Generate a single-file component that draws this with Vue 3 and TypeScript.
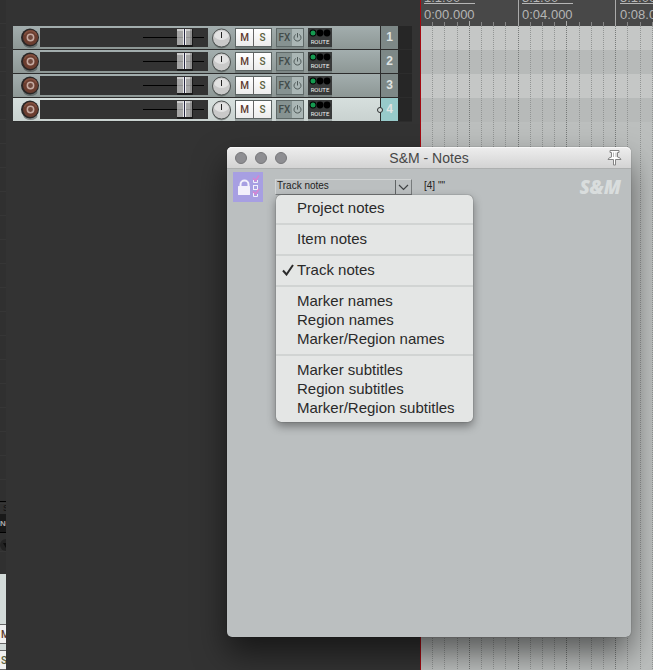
<script setup lang="ts">
import { ref } from 'vue'

interface Track {
  id: number
  selected: boolean
}

const tracks: Track[] = [
  { id: 1, selected: false },
  { id: 2, selected: false },
  { id: 3, selected: false },
  { id: 4, selected: true },
]

const marks = [
  { bar: '1.1.00', time: '0:00.000' },
  { bar: '3.1.00', time: '0:04.000' },
  { bar: '5.1.00', time: '0:08.000' },
]

const ticks = Array.from({ length: 80 }, (_, n) => {
  const i = n + 1
  return { x: Math.floor(12.2 * i - 0.5) + 0.5, major: i % 8 === 0, beat: i % 4 === 0 }
})

const groups: string[][] = [
  ['Project notes'],
  ['Item notes'],
  ['Track notes'],
  ['Marker names', 'Region names', 'Marker/Region names'],
  ['Marker subtitles', 'Region subtitles', 'Marker/Region subtitles'],
]
const current = ref('Track notes')
const open = ref(true)

function choose(name: string) {
  current.value = name
  open.value = false
}
</script>

<template>
  <div class="app">
    <aside class="dock">
      <div class="dock-line"></div>
      <div class="dock-s">S</div>
      <div class="dock-no">NO</div>
      <div class="dock-knob">
        <svg width="6" height="12" viewBox="0 0 6 12">
          <path d="M3 4h3v5z" fill="#0c0c0c" />
        </svg>
      </div>
      <div class="dock-strip">
        <button class="dock-btn mute">M</button>
        <button class="dock-btn solo">S</button>
      </div>
    </aside>

    <section class="tracks">
      <div v-for="t in tracks" :key="t.id" class="track" :class="{ selected: t.selected }">
        <div class="face">
          <button class="rec" aria-label="Record arm">
            <svg width="20" height="21" viewBox="0 0 20 21">
              <ellipse cx="10.500" cy="17" rx="7" ry="4" fill="#3a4040" opacity=".5" />
              <circle cx="10" cy="10.500" r="9" fill="#292626" />
              <circle cx="10.500" cy="10.500" r="7.500" fill="#6b3d2f" />
              <path d="M4.500 8a6.500 6.500 0 0 1 12 0" fill="none" stroke="#82503f" stroke-width="1.500" />
              <circle cx="10.500" cy="10.500" r="3.200" fill="#70493d" stroke="#c5aaa2" stroke-width="1.500" />
            </svg>
          </button>
          <div class="slot">
            <svg width="65" height="19" viewBox="0 0 65 19">
              <path d="M0 9.500H61" stroke="#000" />
              <rect x="34" y="1" width="16" height="18" rx="1" fill="#191919" />
              <rect x="34" y="1" width="15" height="16" fill="#a6a6a6" />
              <rect x="34" y="1" width="15" height="2" fill="#cbcbcb" />
              <rect x="34" y="9" width="15" height="1" fill="#919191" />
              <rect x="40" y="1" width="1" height="16" fill="#e8e8e8" />
              <rect x="41" y="1" width="1" height="16" fill="#25253f" />
              <rect x="42" y="1" width="1" height="16" fill="#f2f2f2" />
              <rect x="47" y="1" width="2" height="16" fill="#777" opacity=".5" />
            </svg>
          </div>
          <button class="knob" aria-label="Pan">
            <svg width="20" height="21" viewBox="0 0 20 21">
              <circle cx="10.500" cy="11.500" r="9" fill="#444b4a" opacity=".45" />
              <circle cx="10.500" cy="10" r="9" fill="#c9c9c9" stroke="#4c5150" />
              <path d="M3 8a8 8 0 0 1 15 0a9 9 0 0 1-15 0" fill="#e2e2e2" />
              <path d="M10.500 4v6" stroke="#222" />
            </svg>
          </button>
          <div class="pair ms">
            <button class="mute">M</button>
            <button class="solo">S</button>
          </div>
          <div class="pair fx">
            <button class="fx-name">FX</button>
            <button class="fx-power" aria-label="Bypass effects">
              <svg width="9" height="9" viewBox="0 0 9 9">
                <path d="M2.800 1.500a3.500 3.500 0 1 0 3.400 0M4.500 0v4.500" fill="none" stroke="#505b5a" />
              </svg>
            </button>
          </div>
          <button class="route">
            <svg width="22" height="8" viewBox="0 0 22 8">
              <circle cx="4" cy="4" r="3.400" fill="#000" />
              <circle cx="4" cy="4" r="2.500" fill="#159a50" />
              <circle cx="11" cy="4" r="3.400" fill="#000" />
              <circle cx="18" cy="4" r="3.400" fill="#000" />
            </svg>
            <span>ROUTE</span>
          </button>
        </div>
        <div class="number">{{ t.id }}<i v-if="t.selected" class="node"></i></div>
        <div class="meter"></div>
      </div>
    </section>

    <main class="timeline">
      <header class="ruler">
        <svg class="ruler-ticks" width="100%" height="26">
          <line
            v-for="t in ticks"
            :key="t.x"
            :x1="t.x"
            :x2="t.x"
            :y1="t.major ? 0 : t.beat ? 21 : 22"
            y2="26"
            :stroke="t.beat ? '#aaa' : '#858585'"
          />
        </svg>
        <div class="marks">
          <div v-for="m in marks" :key="m.time" class="mark">
            <span class="bar">{{ m.bar }}</span>
            <span class="time">{{ m.time }}</span>
          </div>
        </div>
      </header>
      <div class="arrange">
        <div class="lane"></div>
        <div class="lane alt"></div>
        <div class="lane"></div>
        <div class="lane alt"></div>
        <svg class="grid" width="100%" height="100%">
          <line
            v-for="t in ticks"
            :key="t.x"
            :x1="t.x"
            :x2="t.x"
            y1="0"
            y2="100%"
            :stroke="t.beat ? '#777a79' : '#929594'"
            stroke-dasharray="1 1"
          />
        </svg>
      </div>
    </main>

    <section class="dialog" aria-labelledby="dlg-title">
      <header class="titlebar">
        <div class="lights">
          <button aria-label="Close"></button>
          <button aria-label="Minimize"></button>
          <button aria-label="Zoom"></button>
        </div>
        <h1 id="dlg-title">S&amp;M - Notes</h1>
        <button class="pin" aria-label="Keep on top">
          <svg width="16" height="17" viewBox="0 0 16 17">
            <path
              d="M3 1.500H12V3.500H10.500V8Q13.500 8.500 14 10.500H8.500V16H6.500V10.500H1Q1.500 8.500 4.500 8V3.500H3Z"
              fill="#fff"
              stroke="#858585"
            />
            <path d="M6.500 3.500V8M9 3.500V8" stroke="#b8b8b8" />
          </svg>
        </button>
      </header>
      <div class="toolbar">
        <button class="lock" aria-label="Lock notes">
          <svg width="30" height="30" viewBox="0 0 30 30">
            <path d="M7.500 14.500v-2a4 4 0 0 1 8 0v2" fill="none" stroke="#f2f0fb" stroke-width="2" />
            <rect x="5" y="14" width="12" height="9" rx=".5" fill="#f2f0fb" />
            <g fill="none" stroke="#f2f0fb">
              <path d="M20.500 8v2.500h4V8" />
              <rect x="20.500" y="13.500" width="4" height="4" />
              <path d="M20.500 21v3.500h4V22" />
            </g>
            <path
              d="M20 6l2.500 2.500L26 3.500M20 19.500l2.500 2.500 3.500-5"
              fill="none"
              stroke="#d783d2"
              stroke-width="1.500"
            />
          </svg>
        </button>
        <div class="picker">
          <select v-model="current" aria-label="Notes type" @mousedown.prevent="open = !open">
            <template v-for="g in groups" :key="g[0]">
              <option v-for="name in g" :key="name">{{ name }}</option>
            </template>
          </select>
          <span class="arrow">
            <svg width="11" height="7" viewBox="0 0 11 7">
              <path d="M1 1l4.500 4.500L10 1" fill="none" stroke="#3e4142" stroke-width="1.200" />
            </svg>
          </span>
          <div v-if="open" class="menu" role="menu">
            <div v-for="g in groups" :key="g[0]" class="group">
              <button
                v-for="name in g"
                :key="name"
                role="menuitemradio"
                :aria-checked="name === current"
                @click="choose(name)"
              >
                <svg v-if="name === current" class="check" width="12" height="12" viewBox="0 0 12 12">
                  <path d="M1 6.500L4.500 10.500L11 1" fill="none" stroke="#2b2b2b" stroke-width="2" />
                </svg>
                {{ name }}
              </button>
            </div>
          </div>
        </div>
        <span class="target">[4] ""</span>
        <span class="brand">S&amp;M</span>
      </div>
    </section>
  </div>
</template>

<style>
body {
  margin: 0;
  background: #333;
}
</style>

<style scoped>
.app {
  position: relative;
  display: grid;
  grid-template-columns: 6px 414px 1fr;
  min-height: 100vh;
  overflow: hidden;
  background: #333;
  font-family: "Liberation Sans", Arial, sans-serif;
}
button {
  margin: 0;
  padding: 0;
  border: 0;
  background: none;
  font-family: inherit;
}
svg {
  display: block;
}

.dock {
  display: flex;
  flex-direction: column;
  overflow: hidden;
  background: repeating-linear-gradient(#303030 0 23px, #363636 23px 24px);
}
.dock-line {
  margin-top: 501px;
  height: 1px;
  background: #000;
}
.dock-s {
  height: 12px;
  padding-left: 3px;
  font-size: 9px;
  line-height: 12px;
  color: #111;
}
.dock-no {
  height: 18px;
  background: #191919;
  border-bottom: 1px solid #000;
  font-size: 8px;
  font-weight: bold;
  line-height: 20px;
  color: #aaa;
}
.dock-knob {
  width: 12px;
  height: 12px;
  margin-top: 6px;
  border-radius: 6px;
  background: #222;
}
.dock-strip {
  display: flex;
  flex: 1;
  flex-direction: column;
  gap: 6px;
  margin-top: 23px;
  padding-top: 50px;
  background: #d3dbd9;
}
.dock-btn {
  box-sizing: border-box;
  width: 18px;
  height: 20px;
  padding-left: 1px;
  border-top: 1px solid #666;
  border-bottom: 1px solid #666;
  background: #f0f0f0;
  font-family: Roboto, sans-serif;
  font-size: 10px;
  font-weight: 500;
  text-align: left;
}

.tracks {
  display: flex;
  flex-direction: column;
  padding: 26px 8px 0 7px;
}
.track {
  display: flex;
  height: 23px;
  border-bottom: 1px solid #2c2c2c;
}
.face {
  display: flex;
  flex: 1;
  align-items: flex-start;
  padding-top: 2px;
  border-right: 1px solid #2c2c2c;
  background: linear-gradient(#a3aeae, #8d9795);
}
.selected .face {
  background: linear-gradient(#d6dfdd, #c9d2d0);
}
.rec {
  width: 20px;
  height: 19px;
  margin: 0 0 0 7px;
}
.rec svg {
  margin-top: -1px;
}
.slot {
  display: flex;
  flex: 1;
  justify-content: flex-end;
  height: 19px;
  background: #333;
}
.knob {
  width: 20px;
  height: 19px;
  margin: 0 4px 0 3px;
}
.pair {
  display: flex;
  box-sizing: border-box;
  height: 19px;
}
.pair button {
  flex: 1;
  font-family: Roboto, sans-serif;
  font-size: 10px;
  font-weight: 500;
}
.ms {
  width: 37px;
  margin-right: 4px;
  border: 1px solid #5c6463;
  box-shadow: 0 2px 0 rgba(60, 70, 70, 0.35);
}
.ms button {
  background: linear-gradient(#fff, #ececec);
}
.ms button + button {
  border-left: 1px solid #666;
}
.mute {
  color: #5e3a2e;
}
.solo {
  color: #5b603c;
}
.fx {
  width: 28px;
  margin-right: 4px;
  border: 1px solid #5f6968;
  box-shadow: 0 2px 0 rgba(60, 70, 70, 0.2);
}
.pair .fx-name {
  flex: 0 0 15px;
  background: #869291;
  color: #414b4a;
}
.pair .fx-power {
  display: flex;
  align-items: center;
  justify-content: center;
  background: #aab6b5;
}
.route {
  display: flex;
  flex-direction: column;
  align-items: center;
  box-sizing: border-box;
  width: 24px;
  height: 19px;
  margin-right: 48px;
  padding-top: 1px;
  background: #383a3a;
  box-shadow: 0 2px 0 rgba(60, 70, 70, 0.3);
}
.route span {
  font-family: Roboto, sans-serif;
  font-size: 6px;
  line-height: 9px;
  color: #eee;
}
.number {
  position: relative;
  width: 17px;
  background: #7d8887;
  color: #dfe3e2;
  font-size: 12px;
  font-weight: bold;
  line-height: 22px;
  text-align: center;
}
.selected .number {
  background: #97caca;
}
.node {
  position: absolute;
  top: 9px;
  left: -4px;
  width: 4px;
  height: 4px;
  border: 1px solid #2b2f2f;
  border-radius: 3px;
  background: #d3dbd9;
}
.meter {
  width: 14px;
  background: #262626;
}

.timeline {
  display: flex;
  flex-direction: column;
  min-width: 0;
  border-left: 1px solid #a40a12;
}
.ruler {
  position: relative;
  height: 26px;
  overflow: hidden;
  background: #484848;
}
.ruler-ticks {
  position: absolute;
  inset: 0;
}
.marks {
  display: grid;
  grid-template-columns: repeat(3, 98px);
}
.mark {
  display: flex;
  flex-direction: column;
  align-items: flex-start;
  padding-left: 3px;
  color: #b5b5b5;
  font-size: 13px;
}
.bar {
  display: flex;
  align-items: flex-end;
  width: 51px;
  height: 3px;
  border-bottom: 1px solid #b5b5b5;
  line-height: 11px;
}
.time {
  margin-top: 3px;
  line-height: 16px;
}
.arrange {
  position: relative;
  flex: 1;
  background: #bcbfbe;
}
.lane {
  height: 24px;
  background: #c5c7c6;
}
.lane.alt {
  background: #b7bab9;
}
.grid {
  position: absolute;
  inset: 0;
}

.dialog {
  position: absolute;
  inset: 147px 22px 33px 227px;
  border-radius: 5px;
  background: #bbbfc0;
  box-shadow: 0 0 1px rgba(0, 0, 0, 0.6), 0 16px 32px rgba(0, 0, 0, 0.55);
}
.titlebar {
  display: grid;
  grid-template-columns: 1fr auto 1fr;
  align-items: center;
  height: 21px;
  border-bottom: 1px solid #adafaf;
  border-radius: 5px 5px 0 0;
  background: linear-gradient(#eee, #d3d3d3);
  box-shadow: inset 0 1px 0 #f8f8f8;
}
.lights {
  display: flex;
  gap: 8px;
  padding-left: 8px;
}
.lights button {
  box-sizing: border-box;
  width: 12px;
  height: 12px;
  border: 1px solid #77777a;
  border-radius: 6px;
  background: #8e8e92;
}
h1 {
  margin: 0;
  color: #474747;
  font-size: 14px;
  font-weight: normal;
  line-height: 20px;
}
.pin {
  justify-self: end;
  margin-right: 8px;
}
.toolbar {
  display: flex;
  align-items: flex-start;
  padding: 3px 10px 0 6px;
}
.lock {
  width: 30px;
  height: 30px;
  background: #a79fe2;
}
.picker {
  position: relative;
  display: flex;
  box-sizing: border-box;
  width: 137px;
  height: 16px;
  margin: 7px 0 0 12px;
  border: 1px solid #d2d5d5;
  border-right-color: #777b7c;
  border-bottom-color: #777b7c;
}
select {
  flex: 1;
  min-width: 0;
  margin: 0;
  padding: 0 0 3px 1px;
  border: 0;
  appearance: none;
  background: transparent;
  color: #222;
  font-family: inherit;
  font-size: 10px;
  line-height: 11px;
}
.arrow {
  display: flex;
  align-items: center;
  justify-content: center;
  width: 15px;
  border-left: 1px solid #606465;
}
.menu {
  position: absolute;
  z-index: 1;
  top: 15px;
  left: 0;
  width: 197px;
  padding: 4px 0;
  border-radius: 5px;
  background: #e4e6e5;
  box-shadow: 0 0 1px rgba(0, 0, 0, 0.7), 0 4px 10px rgba(0, 0, 0, 0.4);
}
.group + .group {
  padding-top: 5px;
  margin-top: 5px;
  border-top: 2px solid #d1d4d3;
}
.menu button {
  position: relative;
  display: block;
  box-sizing: border-box;
  width: 100%;
  height: 19px;
  padding: 0 0 2px 21px;
  color: #2a2a2a;
  font-size: 15px;
  line-height: 17px;
  text-align: left;
}
.check {
  position: absolute;
  top: 3px;
  left: 6px;
}
.target {
  margin: 7px 0 0 12px;
  color: #222;
  font-size: 10px;
  line-height: 13px;
}
.brand {
  margin: 5px 0 0 auto;
  color: #d9dddd;
  font-family: "Open Sans", "Noto Sans", sans-serif;
  font-size: 19px;
  font-style: italic;
  font-weight: 800;
  line-height: 20px;
}
</style>
